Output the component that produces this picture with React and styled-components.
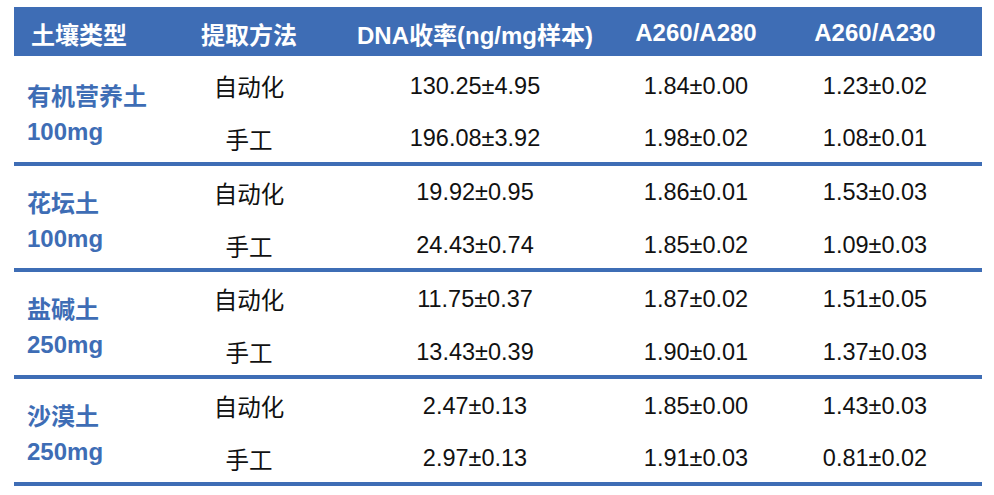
import React from "react";
import styled, { createGlobalStyle } from "styled-components";

const BLUE = "#3e6db5";
const COLS = "158px 154px 298px 144px 214px";

const GlobalStyle = createGlobalStyle`
  html, body {
    margin: 0;
    padding: 0;
    background: #ffffff;
  }
  body {
    font-family: "Liberation Sans", "Noto Sans CJK SC", Arial, sans-serif;
  }
`;

const Page = styled.div`
  width: 994px;
  height: 495px;
  padding: 7px 12px 0 14px;
  box-sizing: border-box;
`;

const Table = styled.div`
  width: 968px;
  display: flex;
  flex-direction: column;
`;

const HeaderRow = styled.div`
  display: grid;
  grid-template-columns: ${COLS};
  height: 49px;
  background: ${BLUE};
  color: #ffffff;
  font-weight: bold;
  font-size: 24px;
  align-items: center;
`;

const HeadCell = styled.div`
  text-align: ${(p) => (p.left ? "left" : "center")};
  padding-left: ${(p) => (p.left ? "17px" : "0")};
  padding-top: 3px;
  white-space: nowrap;
`;

const Body = styled.div`
  padding-top: 3px;
`;

const Group = styled.div`
  display: grid;
  grid-template-columns: ${COLS};
  grid-template-rows: 52px 50.7px;
  border-bottom: 4px solid ${BLUE};
`;

const SoilCell = styled.div`
  grid-row: 1 / span 2;
  display: flex;
  flex-direction: column;
  justify-content: center;
  padding: 7px 0 0 13px;
  color: ${BLUE};
  font-weight: bold;
  font-size: 24px;
  line-height: 35px;
`;

const Cell = styled.div`
  display: flex;
  align-items: center;
  justify-content: center;
  font-size: 23.5px;
  color: #111111;
  white-space: nowrap;
  padding-top: ${(p) => (p.second ? "5px" : "2px")};
`;

const groups = [
  {
    name: "有机营养土",
    mass: "100mg",
    rows: [
      ["自动化", "130.25±4.95", "1.84±0.00", "1.23±0.02"],
      ["手工", "196.08±3.92", "1.98±0.02", "1.08±0.01"],
    ],
  },
  {
    name: "花坛土",
    mass: "100mg",
    rows: [
      ["自动化", "19.92±0.95", "1.86±0.01", "1.53±0.03"],
      ["手工", "24.43±0.74", "1.85±0.02", "1.09±0.03"],
    ],
  },
  {
    name: "盐碱土",
    mass: "250mg",
    rows: [
      ["自动化", "11.75±0.37", "1.87±0.02", "1.51±0.05"],
      ["手工", "13.43±0.39", "1.90±0.01", "1.37±0.03"],
    ],
  },
  {
    name: "沙漠土",
    mass: "250mg",
    rows: [
      ["自动化", "2.47±0.13", "1.85±0.00", "1.43±0.03"],
      ["手工", "2.97±0.13", "1.91±0.03", "0.81±0.02"],
    ],
  },
];

const App = () => {
  return (
    <Page>
      <GlobalStyle />
      <Table>
        <HeaderRow>
          <HeadCell left>土壤类型</HeadCell>
          <HeadCell>提取方法</HeadCell>
          <HeadCell>DNA收率(ng/mg样本)</HeadCell>
          <HeadCell>A260/A280</HeadCell>
          <HeadCell>A260/A230</HeadCell>
        </HeaderRow>
        <Body>
          {groups.map((g) => (
            <Group key={g.name}>
              <SoilCell>
                <span>{g.name}</span>
                <span>{g.mass}</span>
              </SoilCell>
              {g.rows.map((r, i) =>
                r.map((v, j) => (
                  <Cell key={`${i}-${j}`} second={i === 1}>
                    {v}
                  </Cell>
                ))
              )}
            </Group>
          ))}
        </Body>
      </Table>
    </Page>
  );
};

export default App;
